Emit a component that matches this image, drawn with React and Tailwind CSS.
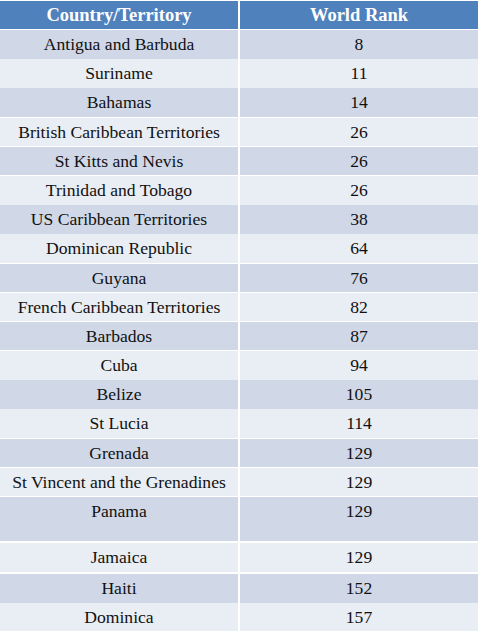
const rows = [
  ["Antigua and Barbuda", "8"],
  ["Suriname", "11"],
  ["Bahamas", "14"],
  ["British Caribbean Territories", "26"],
  ["St Kitts and Nevis", "26"],
  ["Trinidad and Tobago", "26"],
  ["US Caribbean Territories", "38"],
  ["Dominican Republic", "64"],
  ["Guyana", "76"],
  ["French Caribbean Territories", "82"],
  ["Barbados", "87"],
  ["Cuba", "94"],
  ["Belize", "105"],
  ["St Lucia", "114"],
  ["Grenada", "129"],
  ["St Vincent and the Grenadines", "129"],
  ["Panama", "129", "h-[43.6px]"],
  ["Jamaica", "129", "h-[29.4px]"],
  ["Haiti", "152"],
  ["Dominica", "157", "h-[30px]"],
];

export default function App() {
  return (
    <div
      className="w-[480px] h-[631px] bg-white pt-[1px] flex flex-col gap-[2px] overflow-hidden"
      style={{ fontFamily: '"Liberation Serif", serif' }}
    >
      <div className="grid grid-cols-[238px_238px] gap-x-[2px] h-[27px] text-white font-bold text-[18.5px] leading-[28px] text-center">
        <div className="bg-[#4f81bd]">Country/Territory</div>
        <div className="bg-[#4f81bd]">World Rank</div>
      </div>
      {rows.map(([name, rank, h], i) => {
        const bg = i % 2 === 0 ? "bg-[#d0d8e8]" : "bg-[#e9edf4]";
        return (
          <div
            key={name}
            className={`grid grid-cols-[238px_238px] gap-x-[2px] shrink-0 text-[17.6px] leading-[28.6px] text-center text-[#111] ${
              h || "h-[27.2px]"
            }`}
          >
            <div className={bg}>{name}</div>
            <div className={bg}>{rank}</div>
          </div>
        );
      })}
    </div>
  );
}
